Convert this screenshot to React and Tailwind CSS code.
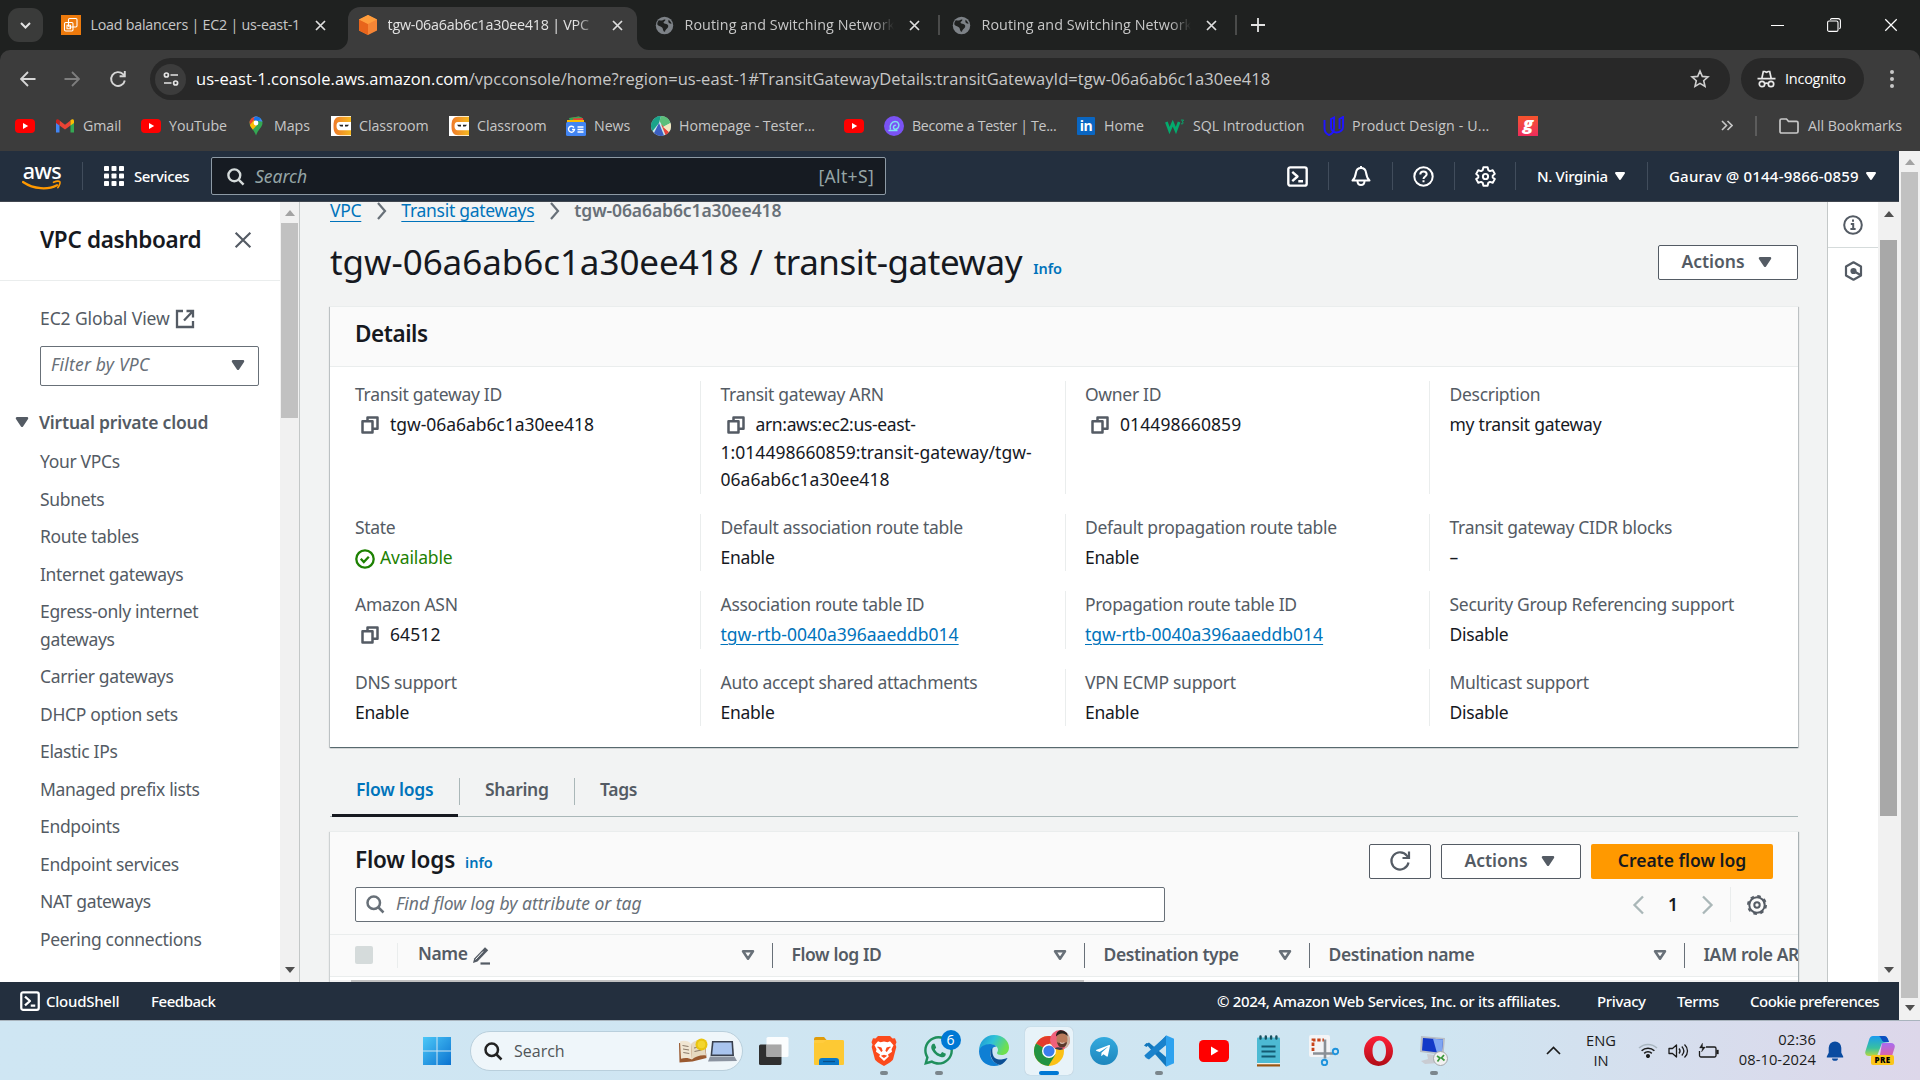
import React from "react";
import { FaWhatsapp, FaTelegramPlane } from "react-icons/fa";

/* ---------- small shared icons ---------- */
const Caret = ({ s = 20, c = "#545b64", open = false }) => (
  <svg width={s} height={s} viewBox="0 0 16 16" className="shrink-0">
    <path d="M4 5h8l-4 6z" fill={open ? "none" : c} stroke={c} strokeWidth="2" strokeLinejoin="round" />
  </svg>
);
const Close = ({ s = 11, c = "#dedede", w = 1.7 }) => (
  <svg width={s} height={s} viewBox="0 0 11 11" className="shrink-0">
    <path d="M1 1l9 9M10 1l-9 9" stroke={c} strokeWidth={w} />
  </svg>
);
const Copy = () => (
  <svg width="20" height="20" viewBox="0 0 16 16" fill="none" stroke="#545b64" strokeWidth="2" strokeLinejoin="round" className="inline-block align-[-4px] mx-[5px]">
    <path d="M2 5h8v9H2z" />
    <path d="M6 5V2h8v9h-4" />
  </svg>
);
const Magnifier = ({ s = 20, c = "#545b64" }) => (
  <svg width={s} height={s} viewBox="0 0 16 16" fill="none" stroke={c} strokeWidth="2" className="shrink-0">
    <circle cx="7" cy="7" r="5" />
    <path d="M10.8 10.8l4 4" />
  </svg>
);
const ShellIcon = ({ s = 20 }) => (
  <svg width={s} height={s} viewBox="0 0 16 16" fill="none" stroke="#fff" strokeWidth="1.8" strokeLinejoin="round" className="shrink-0">
    <rect x="1" y="1" width="14" height="14" rx="1.5" />
    <path d="M4 4.5l4 3.5-4 3.5M8.6 11.6h3.6" />
  </svg>
);
const Tri = ({ up, c = "#505050" }) => (
  <svg width="10" height="6" viewBox="0 0 10 6" className="shrink-0">
    <path d={up ? "M0 6h10L5 0z" : "M0 0h10L5 6z"} fill={c} />
  </svg>
);

/* ---------- browser: tabs ---------- */
const Ec2Icon = () => (
  <svg width="20" height="20" viewBox="0 0 20 20">
    <rect width="20" height="20" fill="#ed7a0c" />
    <g fill="none" stroke="#fff" strokeWidth="1.1">
      <rect x="3.5" y="7.5" width="8.5" height="8.5" rx="1.2" />
      <rect x="7.5" y="3.5" width="8.5" height="8.5" rx="1.2" />
      <path d="M6 10.2h3.5v3.5H6z" />
    </g>
  </svg>
);
const CubeIcon = () => (
  <svg width="20" height="20" viewBox="0 0 20 20">
    <path d="M10 0l9 4.5v11L10 20l-9-4.5v-11z" fill="#f58536" />
    <path d="M10 9v11l-9-4.5v-11z" fill="#e8641b" />
    <path d="M10 0l9 4.5L10 9 1 4.5z" fill="#ff9d3c" />
  </svg>
);
const Globe = () => (
  <svg width="19" height="19" viewBox="0 0 20 20">
    <circle cx="10" cy="10" r="9.2" fill="#7d8287" />
    <path d="M4 4.5c2 0 3 .6 4 0s2-1 3-.6c-.4 1.600-1.600 1.500-2 2.700-.3 1.300 1.600 1.500 3 1.900 1.500.5 2.500 1.700 1.700 3.300-.8 1.700-3 2-3.200 4.800-1.900-.3-2-2-2.400-3.500C7.700 11.300 3 10.500 2.500 9 2.200 7.300 3 5.700 4 4.500z" fill="#1f2120" />
    <path d="M14.500 4c.8.8 2.500 2.500 3 4-1.400.4-2.800-.6-3.400-1.700-.3-.8-.1-1.600.4-2.300z" fill="#1f2120" />
  </svg>
);

function Tab({ icon, title, active, wide, track = "tracking-[0.08px]" }) {
  return (
    <div className={`relative h-[50px] w-[297px] shrink-0 flex items-center pl-[10px] ${active ? "text-[#e3e3e3]" : "text-[#c7c7c7]"}`}>
      {active && (
        <div className="absolute left-0 right-[8px] top-[7px] bottom-0 bg-[#3c3c3c] rounded-t-[12px]">
          <svg width="12" height="12" className="absolute -left-[12px] bottom-0"><path d="M12 0v12H0A12 12 0 0 0 12 0z" fill="#3c3c3c" /></svg>
          <svg width="12" height="12" className="absolute -right-[12px] bottom-0"><path d="M0 0v12h12A12 12 0 0 1 0 0z" fill="#3c3c3c" /></svg>
        </div>
      )}
      <div className="relative w-[29.5px] flex items-center">{icon}</div>
      <div className={`relative overflow-hidden whitespace-nowrap w-[209.5px] text-[14.3px] ${track} ${wide ? "" : "[mask-image:linear-gradient(to_right,black_90%,transparent)]"}`}>{title}</div>
      <div className="relative ml-[15px] flex"><Close /></div>
    </div>
  );
}

function TabStrip() {
  return (
    <div className="h-[50px] bg-[#1f2120] flex items-center">
      <div className="w-[51px] shrink-0 pl-[8px]">
        <div className="w-[35px] h-[34px] rounded-[11px] bg-[#3a3b3a] flex items-center justify-center">
          <svg width="11" height="7" viewBox="0 0 11 7" fill="none" stroke="#e3e3e3" strokeWidth="2"><path d="M1 1l4.500 4.500L10 1" /></svg>
        </div>
      </div>
      <Tab icon={<Ec2Icon />} title="Load balancers | EC2 | us-east-1" wide track="tracking-[-0.25px]" />
      <Tab icon={<CubeIcon />} title="tgw-06a6ab6c1a30ee418 | VPC" active track="tracking-[-0.22px]" />
      <Tab icon={<Globe />} title="Routing and Switching Network" />
      <div className="w-[2px] h-[20px] bg-[#4a4b4a] -mx-[1px] -translate-x-[3px]" />
      <Tab icon={<Globe />} title="Routing and Switching Network" />
      <div className="w-[2px] h-[20px] bg-[#4a4b4a] -mx-[1px] -translate-x-[3px]" />
      <svg width="14" height="14" viewBox="0 0 14 14" stroke="#e3e3e3" strokeWidth="1.8" className="ml-[12px]"><path d="M7 0v14M0 7h14" /></svg>
      <div className="ml-auto flex items-center pr-[22px] gap-[43px]">
        <div className="w-[13px] h-px bg-white" />
        <svg width="14" height="14" viewBox="0 0 14 14" fill="none" stroke="#fff" strokeWidth="1.1"><rect x=".6" y="3" width="10.400" height="10.400" rx="1.500" /><path d="M3.400 1.800A1.600 1.600 0 0 1 4.700.6h6.500a2.200 2.200 0 0 1 2.200 2.200v6.500c0 .7-.4 1.200-1.100 1.400" /></svg>
        <Close s={14} c="#fff" w={0.95} />
      </div>
    </div>
  );
}

/* ---------- browser: address bar ---------- */
function AddressBar() {
  return (
    <div className="h-[50px] mt-[4px] flex items-center">
      <div className="w-[150px] shrink-0 flex items-center pl-[20px]">
        <svg width="16" height="16" viewBox="0 0 16 16" fill="none" stroke="#d6d6d6" strokeWidth="1.800"><path d="M15.500 8H1.500M8 1L1 8l7 7" /></svg>
        <svg width="16" height="16" viewBox="0 0 16 16" fill="none" stroke="#7e7e7e" strokeWidth="1.800" className="ml-[28px]"><path d="M.5 8h14M8 1l7 7-7 7" /></svg>
        <svg width="18" height="18" viewBox="0 0 18 18" fill="none" stroke="#d6d6d6" strokeWidth="1.900" className="ml-[29px]"><path d="M15.800 10.500A6.900 6.900 0 1 1 14 4.200l1.500 1.500" /><path d="M15.800 1v5.200h-5.200" /></svg>
      </div>
      <div className="w-[1580px] h-[42px] rounded-full bg-[#282828] flex items-center pl-[5px] pr-[20px] shrink-0">
        <div className="w-[31px] h-[31px] rounded-full bg-[#3c3c3c] flex items-center justify-center">
          <svg width="16" height="16" viewBox="0 0 16 16" fill="none" stroke="#e3e3e3" strokeWidth="1.700"><circle cx="3.400" cy="4" r="2" /><path d="M7.500 4H15M1 12h7.500" /><circle cx="12.600" cy="12" r="2" /></svg>
        </div>
        <div className="ml-[10px] pt-[1px] text-[16.5px] tracking-[0.05px] text-[#c7c7c7] whitespace-nowrap"><span className="text-white">us-east-1.console.aws.amazon.com</span>/vpcconsole/home?region=us-east-1#TransitGatewayDetails:transitGatewayId=tgw-06a6ab6c1a30ee418</div>
        <svg width="20" height="20" viewBox="0 0 20 20" fill="none" stroke="#d0d0d0" strokeWidth="1.600" className="ml-auto"><path d="M10 2l2.300 5.400 5.700.5-4.300 3.800 1.300 5.700-5-3-5 3 1.300-5.700L2 7.900l5.700-.5z" /></svg>
      </div>
      <div className="ml-[11px] w-[123px] h-[42px] rounded-full bg-[#282828] flex items-center pl-[16px] text-white text-[14.500px] tracking-[-0.25px] shrink-0">
        <svg width="19" height="18" viewBox="0 0 19 18" fill="none" stroke="#e8e8e8" strokeWidth="1.700"><path d="M.5 8.700h18M4.800 8.500l1.500-7h1.500l1.700.8 1.700-.8h1.500l1.500 7" /><circle cx="5" cy="14" r="2.700" /><circle cx="14" cy="14" r="2.700" /><path d="M7.700 13.500q1.800-.9 3.600 0" /></svg>
        <span className="ml-[9px]">Incognito</span>
      </div>
      <div className="ml-[26px] flex flex-col gap-[3px]">
        <i className="w-[4px] h-[4px] rounded-full bg-[#c7c7c7]" /><i className="w-[4px] h-[4px] rounded-full bg-[#c7c7c7]" /><i className="w-[4px] h-[4px] rounded-full bg-[#c7c7c7]" />
      </div>
    </div>
  );
}

/* ---------- browser: bookmarks ---------- */
const Yt = () => (
  <svg width="20" height="20" viewBox="0 0 20 20"><rect y="3" width="20" height="14" rx="4" fill="#f00" /><path d="M8 7l5.200 3L8 13z" fill="#fff" /></svg>
);
const Gmail = () => (
  <svg width="20" height="20" viewBox="0 0 20 20">
    <path d="M1 5v11.500h3.500V8z" fill="#4285f4" /><path d="M19 5v11.500h-3.500V8z" fill="#34a853" />
    <path d="M4.500 4.500v5L10 13.500l5.500-4v-5L10 8.700z" fill="#ea4335" />
    <path d="M15.500 4.500v5L19 7V5c0-1.800-2-2.500-3.500-.5z" fill="#fbbc04" /><path d="M4.500 4.500v5L1 7V5c0-1.800 2-2.500 3.500-.5z" fill="#c5221f" />
  </svg>
);
const MapsPin = () => (
  <svg width="20" height="20" viewBox="0 0 20 20">
    <clipPath id="pin"><path d="M10 .5a6.500 6.500 0 0 1 6.500 6.500c0 4-4.500 6.500-6.500 12.500C8 13.500 3.500 11 3.500 7A6.500 6.500 0 0 1 10 .5z" /></clipPath>
    <g clipPath="url(#pin)"><rect width="20" height="20" fill="#34a853" /><path d="M2 0h10L4.500 8.500 2 6z" fill="#ea4335" /><path d="M9 0h9v6l-5.500-1L7 1z" fill="#4285f4" /><path d="M3 10l5-6 4 4-6.500 7z" fill="#fbbc04" /><path d="M10 0h8L11 6 7.500 3.500z" fill="#1a73e8" /></g>
    <circle cx="10" cy="7" r="2.400" fill="#fff" />
  </svg>
);
const CN = () => (
  <svg width="20" height="20" viewBox="0 0 20 20"><defs><linearGradient id="cn" x1="0" y1="0" x2="1" y2="0"><stop offset="0" stopColor="#ef7a2a" /><stop offset="1" stopColor="#f5b820" /></linearGradient></defs><rect width="20" height="20" fill="#fff" /><path d="M20 .8H9C4.500 .8 2.500 3.500 2.500 10S4.500 19.200 9 19.200h11z" fill="url(#cn)" /><path d="M20 6H8.500C6.500 6 5.500 7.500 5.500 10s1 4.200 3 4.200H20z" fill="#fff" /><path d="M8 8.800h4v1.800h-2.500zM14 8.800h4l-1.500 1.800H14z" fill="#222" /></svg>
);
const News = () => (
  <svg width="20" height="20" viewBox="0 0 20 20"><path d="M4 2l9-1.500V6H5z" fill="#ea4335" /><path d="M3 2l10-1.500 3 1V5H4z" fill="#34a853" /><path d="M7 2.600l10-.6.500 3H7z" fill="#ea4335" /><path d="M1 4h17v4H1z" fill="#fbbc04" /><rect y="6" width="20" height="14" rx="1.500" fill="#4285f4" /><path d="M8 11.500A3 3 0 1 0 8.500 13.500H6M11.500 11h6M11.500 13.500h6M11.500 16h6" fill="none" stroke="#fff" strokeWidth="1.400" /></svg>
);
const Tester = () => (
  <svg width="20" height="20" viewBox="0 0 20 20"><circle cx="10" cy="10" r="10" fill="#cfe6ea" /><path d="M10 0a10 10 0 0 0-8.500 15.200L8 7z" fill="#1aa38a" /><path d="M10 0a10 10 0 0 1 9.500 7L12 11 8.500 5z" fill="#5bbf7a" /><path d="M8 7l5 12.500A10 10 0 0 1 3 17z" fill="#3b5fc0" /><path d="M10 8l4.500 11a10 10 0 0 0 3.500-3z" fill="#e8453c" /><path d="M12 11l7.500-4a10 10 0 0 1-1.500 9z" fill="#f2e9c0" /></svg>
);
const Purple = () => (
  <svg width="20" height="20" viewBox="0 0 20 20"><circle cx="10" cy="10" r="10" fill="#7a52f4" /><path d="M6.500 13.500C5 9 8 5.500 11 5.500c3.500 0 4.500 3 3.500 5.500-.8 2.500-4.500 3-5 .8-.3-2 1.500-3 2.500-2.300M4.500 14.500h9" fill="none" stroke="#7fe0f0" strokeWidth="1.500" /></svg>
);
const LinkedIn = () => (
  <div className="w-[18px] h-[18px] bg-[#0a66c2] text-white font-bold text-[14px] leading-[17px] text-center rounded-[1px] tracking-[-0.5px]">in</div>
);
const W3 = () => (
  <svg width="22" height="16" viewBox="0 0 22 16" fill="none" stroke="#04aa6d"><path d="M1.500 3.500L5 13l3.500-8L12 13l3.500-9.500" strokeWidth="3" /><path d="M17.500 1.500h3l-1.700 2c2 .2 1.700 2.800-1.300 2" strokeWidth="1.100" /></svg>
);
const Udacity = () => (
  <svg width="22" height="20" viewBox="0 0 22 20" fill="none" stroke="#2015ff" strokeWidth="1.900" className="shrink-0"><path d="M1.500 4v8c0 3.500 2 6 4.500 7 3-1 5-3.500 5-7V1.500L8 3v8c0 3.500 2.500 5.500 5.500 5.500S20 14.500 20 11V1l-3.500 2v10" /></svg>
);
const Gee = () => (
  <div className="w-[20px] h-[20px] bg-gradient-to-b from-[#f6532a] to-[#ee2a5a] text-white font-extrabold italic text-[18px] leading-[14px] text-center">g</div>
);
const bookmarks = [
  { icon: <Yt />, w: "w-[40px]" },
  { icon: <Gmail />, t: "Gmail", w: "w-[86px]" },
  { icon: <Yt />, t: "YouTube", w: "w-[105px]" },
  { icon: <MapsPin />, t: "Maps", w: "w-[85px]" },
  { icon: <CN />, t: "Classroom", w: "w-[118px]" },
  { icon: <CN />, t: "Classroom", w: "w-[117px]" },
  { icon: <News />, t: "News", w: "w-[85px]" },
  { icon: <Tester />, t: "Homepage - Tester...", w: "w-[193px]" },
  { icon: <Yt />, w: "w-[40px]" },
  { icon: <Purple />, t: "Become a Tester | Te...", w: "w-[192px] tracking-[-0.35px]" },
  { icon: <LinkedIn />, t: "Home", w: "w-[89px]" },
  { icon: <W3 />, t: "SQL Introduction", w: "w-[159px]" },
  { icon: <Udacity />, t: "Product Design - U...", w: "w-[194px] tracking-[0.15px]" },
  { icon: <Gee />, w: "w-[40px]" },
];
function Bookmarks() {
  return (
    <div className="h-[47px] pb-[3px] flex items-center pl-[15px] text-[14.2px] tracking-[-0.04px] text-[#c7c7c7] whitespace-nowrap">
      {bookmarks.map((b, i) => (
        <div key={i} className={`flex items-center shrink-0 ${b.w}`}>
          <div className="w-[20px] mr-[8px] flex justify-center shrink-0">{b.icon}</div>
          {b.t}
        </div>
      ))}
      <div className="ml-auto flex items-center pr-[18px]">
        <svg width="12" height="11" viewBox="0 0 12 11" fill="none" stroke="#c7c7c7" strokeWidth="1.600"><path d="M1 1l4.500 4.500L1 10M6.500 1L11 5.500 6.500 10" /></svg>
        <div className="w-[2px] h-[20px] bg-[#5c5c5c] mx-[22px]" />
        <svg width="20" height="16" viewBox="0 0 20 16" fill="none" stroke="#c7c7c7" strokeWidth="1.700"><path d="M1 2.500C1 1.500 1.700 1 2.500 1h5l2 2.300h8c.9 0 1.500.6 1.500 1.500v8.700c0 .9-.6 1.500-1.500 1.500h-15C1.600 15 1 14.400 1 13.500z" /></svg>
        <span className="ml-[9px] tracking-[-0.04px]">All Bookmarks</span>
      </div>
    </div>
  );
}

/* ---------- console header ---------- */
const HDiv = ({ cls }) => <div className={`w-px h-[28px] bg-[#414d5c] shrink-0 ${cls}`} />;
function AwsHeader() {
  return (
    <div className="h-[51px] bg-[#232f3e] border-b border-[#414750] flex items-center text-white text-[15px] font-medium whitespace-nowrap shrink-0">
      <div className="w-[40px] ml-[22px] flex flex-col items-center">
        <div className="text-[21.5px] leading-[16px] h-[17px] font-medium tracking-[-0.5px]">aws</div>
        <svg width="40" height="10" viewBox="0 0 40 10"><path d="M1 2c11 7.500 25 8 34 3.200" fill="none" stroke="#ff9900" strokeWidth="2.200" strokeLinecap="round" /><path d="M31.500 2.300c3-1.300 5.500-1.200 6.300-.6.600 1-.3 4-2 6" fill="none" stroke="#ff9900" strokeWidth="1.600" strokeLinecap="round" /></svg>
      </div>
      <HDiv cls="ml-[20px]" />
      <svg width="20" height="20" viewBox="0 0 20 20" fill="#fff" className="ml-[21px]">
        {[0, 7.5, 15].map((x) => [0, 7.5, 15].map((y) => <rect key={`${x}-${y}`} x={x} y={y} width="5" height="5" rx=".8" />))}
      </svg>
      <span className="ml-[10px] w-[58px] tracking-[-0.4px]">Services</span>
      <div className="ml-[19px] w-[675px] h-[38px] rounded-[2px] border border-[#8d9aa5] bg-[#161b22] flex items-center pl-[14px] pr-[11px] text-[17.5px] font-normal text-[#95a5a6] shrink-0">
        <Magnifier c="#d5dbdb" s={19} />
        <span className="ml-[10px] italic tracking-[0px]">Search</span>
        <span className="ml-auto tracking-[0.35px]">[Alt+S]</span>
      </div>
      <div className="ml-auto flex items-center pr-[20px]">
        <ShellIcon s={21} />
        <HDiv cls="ml-[20px]" />
        <svg width="20" height="21" viewBox="0 0 20 21" fill="none" stroke="#fff" strokeWidth="2" strokeLinejoin="round" className="ml-[22px]"><path d="M1.500 14.500h17c-2.700-2.500-3-4.500-3.500-8-.4-2.700-2-4.500-5-4.500S5.400 3.800 5 6.500c-.5 3.500-.8 5.500-3.500 8z" /><path d="M6.500 15c0 2.500 1.300 4 3.500 4s3.500-1.500 3.500-4M10 0v2" /></svg>
        <HDiv cls="ml-[21px]" />
        <svg width="21" height="21" viewBox="0 0 21 21" fill="none" stroke="#fff" strokeWidth="2" className="ml-[20px]"><circle cx="10.500" cy="10.500" r="9.200" /><path d="M7.300 8.500c0-2 1.400-3 3.200-3s3.200 1.100 3.200 2.800c0 2.200-3.200 2.200-3.200 4.700M10.500 14.300v2" /></svg>
        <HDiv cls="ml-[20px]" />
        <svg width="21" height="21" viewBox="0 0 16 16" fill="none" stroke="#fff" strokeWidth="1.500" strokeLinejoin="round" className="ml-[20px]"><path d="M6.400 1h3.200l.5 2.100 1.300.8 2.100-.7 1.600 2.800L13.500 7.400v1.300L15.100 10l-1.600 2.800-2.100-.7-1.300.8-.5 2.100H6.400l-.5-2.100-1.300-.8-2.100.7L.9 10l1.600-1.300V7.400L.9 6l1.600-2.800 2.100.7 1.300-.8z" /><circle cx="8" cy="8" r="2" /></svg>
        <HDiv cls="ml-[19px]" />
        <span className="ml-[21px] w-[71px] tracking-[-0.35px]">N. Virginia</span>
        <span className="ml-[4px] flex"><Caret s={16} c="#fff" /></span>
        <HDiv cls="ml-[19px]" />
        <span className="ml-[21px] w-[190px] tracking-[0.2px]">Gaurav @ 0144-9866-0859</span>
        <span className="ml-[4px] flex"><Caret s={16} c="#fff" /></span>
      </div>
    </div>
  );
}

/* ---------- side navigation ---------- */
const navItems = ["Your VPCs", "Subnets", "Route tables", "Internet gateways", "Egress-only internet gateways", "Carrier gateways", "DHCP option sets", "Elastic IPs", "Managed prefix lists", "Endpoints", "Endpoint services", "NAT gateways", "Peering connections"];
function Sidebar() {
  return (
    <div className="flex shrink-0 border-r border-[#c4c8c8]">
      <div className="w-[280px] bg-white text-[#545b64] text-[17.5px] leading-[27.5px] tracking-[-0.33px]">
        <div className="h-[79px] border-b border-[#eaeded] flex items-center pl-[40px] pb-[2px]">
          <span className="text-[22.5px] font-semibold text-[#16191f] tracking-[-0.33px] w-[194px]">VPC dashboard</span>
          <Close s={18} c="#545b64" w={1.3} />
        </div>
        <div className="pl-[40px] pt-[24px] flex items-center tracking-[-0.1px]">EC2 Global View
          <svg width="20" height="20" viewBox="0 0 20 20" fill="none" stroke="#545b64" strokeWidth="2.300" className="ml-[5px]"><path d="M8 2H2v16h16v-6M11.500 2H18v6.500M18 2l-9 9.500" /></svg>
        </div>
        <div className="ml-[40px] mt-[13px] w-[219px] h-[40px] border border-[#687078] rounded-[2px] flex items-center justify-between pl-[10px] pr-[10px] italic text-[#687078] tracking-[0.2px] pb-[1px]">
          Filter by VPC<Caret />
        </div>
        <div className="mt-[23px] flex items-center pl-[12px] font-semibold tracking-[-0.2px]"><Caret /><span className="ml-[7px]">Virtual private cloud</span></div>
        <div className="mt-[12px] pl-[40px] pr-[60px] flex flex-col gap-[10px]">
          {navItems.map((n) => <div key={n}>{n}</div>)}
        </div>
      </div>
      <div className="w-[19px] bg-[#f1f1f1] flex flex-col items-center pt-[8px] pb-[9px]">
        <Tri up c="#a3a3a3" />
        <div className="w-[17px] h-[195px] bg-[#c1c1c1] mt-[7px]" />
        <div className="mt-auto flex"><Tri /></div>
      </div>
    </div>
  );
}

/* ---------- details card ---------- */
const idText = "text-[#16191f] tracking-[-0.05px]";
const numText = "text-[#16191f] tracking-[0.1px]";
const wordText = "text-[#16191f] tracking-[-0.25px]";
const rows = [
  [
    { k: "Transit gateway ID", v: "tgw-06a6ab6c1a30ee418", copy: true, cls: idText },
    { k: "Transit gateway ARN", v: <><span className="tracking-[-0.35px]">arn:aws:ec2:us-east-</span><br />1:014498660859:transit-gateway/tgw-<br />06a6ab6c1a30ee418</>, copy: true, cls: "text-[#16191f] tracking-[0.03px]" },
    { k: "Owner ID", v: "014498660859", copy: true, cls: numText },
    { k: "Description", v: "my transit gateway", cls: wordText },
  ],
  [
    { k: "State", v: "Available", ok: true, cls: "text-[#1d8102] tracking-[-0.15px]" },
    { k: "Default association route table", v: "Enable", cls: wordText },
    { k: "Default propagation route table", v: "Enable", cls: wordText },
    { k: "Transit gateway CIDR blocks", v: "–", cls: wordText },
  ],
  [
    { k: "Amazon ASN", v: "64512", copy: true, cls: numText },
    { k: "Association route table ID", v: "tgw-rtb-0040a396aaeddb014", cls: "text-[#0073bb] underline underline-offset-[3px] decoration-1" },
    { k: "Propagation route table ID", v: "tgw-rtb-0040a396aaeddb014", cls: "text-[#0073bb] underline underline-offset-[3px] decoration-1" },
    { k: "Security Group Referencing support", v: "Disable", cls: wordText },
  ],
  [
    { k: "DNS support", v: "Enable", cls: wordText },
    { k: "Auto accept shared attachments", v: "Enable", cls: wordText },
    { k: "VPN ECMP support", v: "Enable", cls: wordText },
    { k: "Multicast support", v: "Disable", cls: wordText },
  ],
];
function Field({ k, v, copy, ok, cls }) {
  return (
    <div>
      <div className="text-[#545b64] tracking-[-0.3px]">{k}</div>
      <div className={`mt-[2.5px] whitespace-nowrap ${cls}`}>
        {copy && <><Copy /><span className="inline-block w-[5px]" /></>}
        {ok && (
          <svg width="20" height="20" viewBox="0 0 20 20" fill="none" stroke="#1d8102" strokeWidth="2.300" className="inline-block align-[-5px] mr-[5px]"><circle cx="10" cy="10" r="8.700" /><path d="M5.800 9.800l3 3.200 5-5.200" /></svg>
        )}
        {v}
      </div>
    </div>
  );
}
function DetailsCard() {
  return (
    <div className="mt-[26px] h-[441px] bg-white border-t border-[#eaeded] shadow-[0_1px_1px_0_rgba(0,28,36,0.5),1px_1px_1px_0_rgba(0,28,36,0.15),-1px_1px_1px_0_rgba(0,28,36,0.15)] shrink-0">
      <div className="h-[60px] bg-[#fafafa] border-b border-[#eaeded] flex items-center pl-[25px] pb-[5px] text-[22.5px] font-semibold text-[#16191f] tracking-[-0.45px]">Details</div>
      <div className="pt-[14px] pl-[25px] flex flex-col gap-[20px]">
        {rows.map((r, i) => (
          <div key={i} className="flex">
            {r.map((f, j) => (
              <div key={f.k} className={`shrink-0 ${j === 0 ? "w-[345px]" : j === 3 ? "w-[330px] border-l border-[#eaeded] pl-[19.500px]" : "w-[364.500px] border-l border-[#eaeded] pl-[19.500px]"}`}><Field {...f} /></div>
            ))}
          </div>
        ))}
      </div>
    </div>
  );
}

/* ---------- tabs and flow log table ---------- */
function PageTabs() {
  return (
    <div className="mt-[20px] h-[50px] border-b border-[#aab7b8] flex font-semibold text-[#545b64] shrink-0 tracking-[-0.3px]">
      <div className="relative w-[130px] border-r border-[#aab7b8] h-[27px] mt-[11px] flex items-center pl-[26px] text-[#0073bb] pb-[3px] tracking-[-0.2px]">Flow logs
        <div className="absolute left-[2px] top-[36px] w-[126px] h-[3px] bg-[#16191f]" />
      </div>
      <div className="w-[115px] border-r border-[#aab7b8] h-[27px] mt-[11px] flex items-center pl-[25px] pb-[3px]">Sharing</div>
      <div className="h-[27px] mt-[11px] flex items-center pl-[25px] pb-[3px]">Tags</div>
    </div>
  );
}
const Btn = ({ children, cls }) => (
  <div className={`h-[35px] border border-[#545b64] rounded-[2px] bg-white flex items-center justify-center font-semibold text-[#545b64] tracking-[0px] pb-[1px] shrink-0 ${cls}`}>{children}</div>
);
const cols = [
  { t: "Name", w: "w-[373.500px] pl-[20px] border-l-0", edit: true },
  { t: "Flow log ID", w: "w-[312px] pl-[19px]" },
  { t: "Destination type", w: "w-[225px] pl-[19px]" },
  { t: "Destination name", w: "w-[375px] pl-[19px]" },
  { t: "IAM role ARN", w: "w-[200px] pl-[19px]", last: true },
];
function FlowCard() {
  return (
    <div className="mt-[14px] h-[200px] bg-white shrink-0 border-t border-[#eaeded] shadow-[1px_1px_1px_0_rgba(0,28,36,0.3),-1px_1px_1px_0_rgba(0,28,36,0.15)]">
      <div className="h-[102px] bg-[#fafafa] pt-[12px] px-[25px]">
        <div className="flex items-center">
          <span className="text-[22.5px] font-semibold text-[#16191f] tracking-[-0.2px] pb-[3px]">Flow logs</span>
          <span className="ml-[10px] text-[14.500px] font-semibold text-[#0073bb] mt-[3px]">info</span>
          <Btn cls="ml-auto w-[62px]">
            <svg width="22" height="22" viewBox="0 0 22 22" fill="none" stroke="#545b64" strokeWidth="2.200"><path d="M19.500 12.500A8.600 8.600 0 1 1 18 5.800l1.500 2" /><path d="M20 1.500V8h-6.500" /></svg>
          </Btn>
          <Btn cls="ml-[10px] w-[140px]"><span>Actions</span><span className="ml-[10px] flex"><Caret /></span></Btn>
          <div className="ml-[10px] w-[182px] h-[35px] rounded-[2px] bg-[#ff9900] flex items-center justify-center font-semibold text-[#16191f] tracking-[0px] pb-[1px]">Create flow log</div>
        </div>
        <div className="mt-[8px] flex items-center">
          <div className="w-[810px] h-[35px] border border-[#687078] rounded-[2px] bg-white flex items-center pl-[9px] pb-[1px] italic text-[#687078]">
            <Magnifier c="#687078" /><span className="ml-[11px]">Find flow log by attribute or tag</span>
          </div>
          <svg width="13" height="20" viewBox="0 0 13 20" fill="none" stroke="#aab7b8" strokeWidth="2.300" className="ml-auto"><path d="M11 1.500L2.500 10l8.500 8.500" /></svg>
          <span className="w-[56px] text-center font-semibold text-[#16191f]">1</span>
          <svg width="13" height="20" viewBox="0 0 13 20" fill="none" stroke="#aab7b8" strokeWidth="2.300"><path d="M2 1.500l8.500 8.500L2 18.500" /></svg>
          <div className="w-px h-[35px] bg-[#eaeded] ml-[16px]" />
          <svg width="20" height="20" viewBox="0 0 20 20" fill="none" stroke="#545b64" strokeLinejoin="round" className="ml-[16px] mr-[6px]"><circle cx="10" cy="10" r="7.700" strokeWidth="2" /><circle cx="10" cy="10" r="9.100" strokeWidth="1.700" strokeDasharray="3.580 3.567" /><circle cx="10" cy="10" r="2.700" strokeWidth="2" /></svg>
        </div>
      </div>
      <div className="h-[43px] bg-[#fafafa] border-y border-[#eaeded] flex items-center overflow-hidden font-semibold text-[#545b64] tracking-[-0.4px] whitespace-nowrap pb-[1px]">
        <div className="ml-[25px] w-[18px] h-[18px] rounded-[2px] bg-[#d5dbdb] shrink-0" />
        <div className="ml-[24px] w-px h-[25px] bg-[#eaeded] shrink-0" />
        {cols.map((c) => (
          <div key={c.t} className={`h-[25px] flex items-center shrink-0 border-l border-[#687078] ${c.w}`}>
            {c.edit ? <span className="pb-[2px]">{c.t}</span> : c.t}
            {c.edit && <svg width="20" height="20" viewBox="0 0 20 20" className="ml-[3px]"><path d="M2 18l1.200-4.500L14 2.200l3.200 3L6.500 16.500z" fill="#545b64" /><path d="M4.500 14.500l7.500-8" stroke="#fafafa" strokeWidth="1" /><path d="M9.500 18.500H19" stroke="#545b64" strokeWidth="2.200" /></svg>}
            {!c.last && <span className="ml-auto mr-[14px] flex"><Caret open c="#687078" /></span>}
          </div>
        ))}
      </div>
      <div className="h-[2px] bg-white mt-[1px]" />
      <div className="h-[4px] bg-[#f1f1f1] pl-[21px]"><div className="w-[733px] h-[4px] bg-[#c1c1c1]" /></div>
    </div>
  );
}

function MainPanel() {
  return (
    <div className="w-[1527px] bg-[#f2f3f3] pl-[30px] pr-[29px] flex flex-col overflow-hidden text-[17.5px] leading-[27.5px] shrink-0">
      <div className="h-[24px] -mt-[3px] flex items-center text-[#0073bb] shrink-0 tracking-[-0.28px]">
        <span className="underline underline-offset-[4px] decoration-1">VPC</span>
        <svg width="11" height="18" viewBox="0 0 11 18" fill="none" stroke="#687078" strokeWidth="2.200" className="mx-[14.500px]"><path d="M2 1l7 8-7 8" /></svg>
        <span className="underline underline-offset-[4px] decoration-1">Transit gateways</span>
        <svg width="11" height="18" viewBox="0 0 11 18" fill="none" stroke="#687078" strokeWidth="2.200" className="mx-[14.500px]"><path d="M2 1l7 8-7 8" /></svg>
        <span className="font-semibold text-[#687078] tracking-[-0.1px]">tgw-06a6ab6c1a30ee418</span>
      </div>
      <div className="mt-[21px] h-[36px] flex items-center text-[#16191f] shrink-0">
        <span className="text-[35px] leading-[45px] tracking-[-0.06px] whitespace-nowrap [word-spacing:2px] pb-[1px]">tgw-06a6ab6c1a30ee418 / <span className="tracking-[-0.44px]">transit-gateway</span></span>
        <span className="ml-[11px] mt-[14px] text-[14.500px] font-semibold text-[#0073bb] tracking-[-0.1px]">Info</span>
        <Btn cls="ml-auto w-[140px]"><span>Actions</span><span className="ml-[10px] flex"><Caret /></span></Btn>
      </div>
      <DetailsCard />
      <PageTabs />
      <FlowCard />
    </div>
  );
}

function RightRail() {
  return (
    <>
      <div className="w-[51px] bg-white border-l border-[#c4c8c8] flex flex-col items-center shrink-0">
        <div className="h-[46px] w-full border-b border-[#d5dbdb] flex items-center justify-center">
          <svg width="20" height="20" viewBox="0 0 20 20" fill="none" stroke="#545b64" strokeWidth="2"><circle cx="10" cy="10" r="8.800" /><path d="M10 4.500v2.300M7.800 9h2.400v5M7.400 14h5.200" /></svg>
        </div>
        <svg width="19" height="20" viewBox="0 0 19 20" fill="none" stroke="#545b64" strokeWidth="2.200" strokeLinejoin="round" className="mt-[13px]"><path d="M9.500 1.300l7.500 4.200v9l-7.500 4.200L2 14.500v-9z" /><path d="M9.500 10l7 4" /><circle cx="9.500" cy="10" r="2" fill="#545b64" /></svg>
      </div>
      <div className="w-[21px] bg-[#f1f1f1] flex flex-col items-center pt-[9px] pb-[9px] shrink-0">
        <Tri up />
        <div className="w-[17px] h-[576px] bg-[#a8a8a8] mt-[23px]" />
        <div className="mt-auto flex"><Tri /></div>
      </div>
    </>
  );
}

function Footer() {
  return (
    <div className="h-[38px] bg-[#232f3e] flex items-center text-white text-[15px] font-medium tracking-[-0.38px] whitespace-nowrap shrink-0">
      <span className="ml-[20px] flex"><ShellIcon /></span>
      <span className="ml-[6px] w-[105px] tracking-[-0.25px]">CloudShell</span>
      <span className="tracking-[-0.45px]">Feedback</span>
      <span className="ml-auto w-[380px] tracking-[-0.31px]">© 2024, Amazon Web Services, Inc. or its affiliates.</span>
      <span className="w-[80px]">Privacy</span>
      <span className="w-[73px]">Terms</span>
      <span className="w-[149px] tracking-[-0.5px]">Cookie preferences</span>
    </div>
  );
}

/* ---------- desktop taskbar ---------- */
const Slot = ({ children, dot, active }) => (
  <div className="w-[55px] shrink-0 flex justify-center">
    <div className={`relative w-[48px] h-[48px] rounded-[5px] flex items-center justify-center ${active ? "bg-[#e8f3f9] shadow-[0_0_1px_#9ab]" : ""}`}>
      {children}
      {dot && <div className="absolute bottom-0 left-[20px] w-[8px] h-[4px] rounded-full bg-[#7b868c]" />}
      {active && <div className="absolute bottom-0 left-[14px] w-[20px] h-[4px] rounded-full bg-[#0078d4]" />}
    </div>
  </div>
);
function Taskbar() {
  return (
    <div className="h-[60px] border-t border-[#a9b4bd] bg-gradient-to-r from-[#cfe6f3] via-[#cfe5f1] via-75% to-[#ddd7ea] flex items-center font-['Open_Sans'] text-[#1b1b1b] shrink-0">
      <svg width="30" height="30" viewBox="0 0 30 30" className="ml-[422px]">
        <defs><linearGradient id="win" x1="0" y1="0" x2="1" y2="1" gradientUnits="objectBoundingBox"><stop offset="0" stopColor="#4cc8f8" /><stop offset="1" stopColor="#0a72d0" /></linearGradient></defs>
        <path d="M1 1h13.500v13.500H1zM15.500 1H29v13.500H15.500zM1 15.500h13.500V29H1zM15.500 15.500H29V29H15.500z" fill="url(#win)" />
      </svg>
      <div className="ml-[18px] w-[273px] h-[40px] rounded-full bg-[#eff6fa] border border-[#b9cfdc] flex items-center pl-[12px] shrink-0">
        <Magnifier s={20} c="#222" />
        <span className="ml-[11px] text-[16px] text-[#505558]">Search</span>
        <svg width="60" height="28" viewBox="0 0 60 28" className="ml-auto mr-[5px]">
          <path d="M2 6l12 1.500L28 4l1.500 17-14 3.500-13 1z" fill="#9a5a30" />
          <path d="M3 4.500c4-1.500 9-.5 11 2.500l1 15.500c-3-2-8-2-11-.8z" fill="#f0e6d2" /><path d="M14 7c2-3 8-4.500 13.500-3.500l1.500 15c-5-.7-11 1-14 4z" fill="#e6d9c0" />
          <path d="M5.500 8.500l6 1M6 12l6 1M6.300 15.500l6 1M17 11l7-1.500M17.500 14.500l7-1.500" stroke="#8a7a68" strokeWidth="1" />
          <circle cx="24.500" cy="7.500" r="6" fill="#e9c410" /><circle cx="24.500" cy="7.500" r="3.800" fill="#f3d62e" />
          <path d="M35 4h21l1 15H33.500z" fill="#39404e" /><path d="M36.500 5.500h18l.8 12H35.200z" fill="#a9c4ee" /><path d="M33 19.500h24.500L60 24l-29 .5z" fill="#8b93a0" />
        </svg>
      </div>
      <div className="ml-[3px] flex items-center">
        <Slot><svg width="30" height="30" viewBox="0 0 30 30"><rect x="0" y="8.500" width="22.500" height="20.500" rx="1.500" fill="#2f2f2f" /><rect x="7.500" y="1" width="22" height="20" rx="1.500" fill="#fff" fillOpacity=".9" /><rect x="7.500" y="8.500" width="15" height="12.500" fill="#a7a7a7" /></svg></Slot>
        <Slot><svg width="30" height="28" viewBox="0 0 30 28"><path d="M0 2a2 2 0 0 1 2-2h8l3 3.500H0z" fill="#e09c0a" /><rect y="3" width="30" height="25" rx="1.500" fill="#ffcc3e" /><path d="M0 6h9l4-3h15a2 2 0 0 1 2 2v21a2 2 0 0 1-2 2H2a2 2 0 0 1-2-2z" fill="#fdc934" /><path d="M5 28v-4a3 3 0 0 1 3-3h14a3 3 0 0 1 3 3v4z" fill="#0a78c8" /><path d="M9 24.500h12" stroke="#06508c" strokeWidth="1.300" /></svg></Slot>
        <Slot dot><svg width="26" height="32" viewBox="0 0 26 32"><path d="M7 1h12l2.500 2.500 2.500-.3 1.500 4-1 2.300.8 2.500-3 11.500c-.5 2-1.500 3-9.300 7.500C5.200 26.500 4.200 25.500 3.700 23.500L.7 12l.8-2.500-1-2.300 1.500-4 2.500.3z" fill="#fb4a1c" /><path d="M13 6.500l3.500.8 2.500-1 3.500 4-2 4 .5 2.500-4 2.700.8 2-4.800 4.500-4.800-4.500.8-2-4-2.700.5-2.500-2-4 3.500-4 2.500 1z" fill="#fff" /><path d="M6.500 12l3.500 1 1 2.500-1 1M19.500 12L16 13l-1 2.500 1 1M11 21l2-.7 2 .7-2 1.300z" stroke="#fb4a1c" strokeWidth="1.100" fill="#fb4a1c" /></svg></Slot>
        <Slot dot>
          <FaWhatsapp size={33} color="#1f8f5c" />
          <div className="absolute left-[26px] top-[3px] w-[20px] h-[20px] rounded-full bg-[#0078d4] text-white text-[14px] leading-[20px] text-center">6</div>
        </Slot>
        <Slot><svg width="30" height="31" viewBox="0 0 30 31">
          <defs><linearGradient id="eg" x1="0" y1="0" x2="1" y2=".4"><stop offset="0" stopColor="#1b8fd6" /><stop offset=".5" stopColor="#2fc2d8" /><stop offset="1" stopColor="#6fe04e" /></linearGradient></defs>
          <path d="M15 0c9 0 15 6 15 12.500 0 5-3.500 7.500-7.500 7.500-3 0-4.500-1-4.500-2 0-.8 1-1.200 1-3.200C19 12 16 9.500 12 9.500 6 9.500 1 13 0 16 0 7 6 0 15 0z" fill="url(#eg)" />
          <path d="M0 16C.5 12 5.500 9 11 9c3 0 5 1 6.500 2.500-4 0-7 4-6 9 1 5.500 6 8.500 9.500 9.500-2 .7-4 1-6 1C6 31 0 24.500 0 16z" fill="#0f7fd4" />
          <path d="M13.500 12.500C9 16 11.500 28 21 30c3-1 6-4 7.500-7-1 .3-12 4.500-14.500-3-.8-2.500-.8-5-.5-7.500z" fill="#0c4f94" />
        </svg></Slot>
        <Slot active>
          <svg width="30" height="30" viewBox="0 0 30 30"><circle cx="15" cy="15" r="15" fill="#fbc116" /><path d="M15 15L2 7.500A15 15 0 0 1 28 7.500H15z" fill="#e33b2e" /><path d="M2 7.500A15 15 0 0 0 14.500 30l7-11.500L15 15z" fill="#229342" /><circle cx="15" cy="15" r="7" fill="#fff" /><circle cx="15" cy="15" r="5.600" fill="#3b7ded" /></svg>
          <svg width="20" height="20" viewBox="0 0 20 20" className="absolute left-[25px] top-[3px]"><clipPath id="av"><circle cx="10" cy="10" r="10" /></clipPath><g clipPath="url(#av)"><rect width="20" height="20" fill="#f0607a" /><rect x="15" width="5" height="20" fill="#c9b7a4" /><ellipse cx="12" cy="9.500" rx="5.500" ry="7.500" fill="#b9795a" /><path d="M6 6.500c0-5 3-6.500 6.500-6.500s5.500 3 5 6.500c-1.500-2.500-3.500-3.200-5.500-3-2.500.2-4.500 1.500-6 3z" fill="#2a211e" /><path d="M7 12c1.500 1.500 8 1.500 10 0-.5 4-2.500 5.500-5 5.500S8 16 7 12z" fill="#5a382c" /><path d="M10 12.800q2 1.200 4.500 0" stroke="#f0dcd0" fill="none" /><path d="M3 20c2-3 5-3.500 9-2l2 2z" fill="#3a3a44" /></g></svg>
        </Slot>
        <Slot><div className="w-[28px] h-[28px] rounded-full bg-gradient-to-b from-[#34aade] to-[#1d86bd] flex items-center justify-center pr-[2px]"><FaTelegramPlane size={16} color="#fff" /></div></Slot>
        <Slot dot><svg width="30" height="32" viewBox="0 0 30 32"><path d="M2 9l3-1.500L22 22v9.500z" fill="#1277bd" /><path d="M2 23l3 1.500L22 10V.5z" fill="#1a82cc" /><path d="M0 10.500L2.500 8 5 9.500 2.500 12z" fill="#1277bd" /><path d="M2 23l-1.700-2.500L22 1v9z" fill="#1a82cc" /><path d="M22 .3l8 3.500v24.500l-8 3.500z" fill="#2ea2ef" /></svg></Slot>
        <Slot><svg width="30" height="22" viewBox="0 0 30 22"><rect width="30" height="22" rx="4.500" fill="#f00" /><path d="M12 6.500l7.500 4.500-7.500 4.500z" fill="#fff" /></svg></Slot>
        <Slot><svg width="23" height="32" viewBox="0 0 23 32"><rect y="2.500" width="23" height="26" rx="1" fill="#4dbad3" /><rect y="28" width="23" height="1.500" fill="#f4efe4" /><rect y="29.300" width="23" height="2.200" fill="#9c5510" /><path d="M4.500 11.500h14M4.500 16.500h14M4.500 21.500h14" stroke="#135a72" strokeWidth="1.800" /><path d="M3.500 1.500v2M8.800 1.500v2M14.100 1.500v2M19.400 1.500v2" stroke="#17505f" strokeWidth="2.400" strokeLinecap="round" /></svg></Slot>
        <Slot><svg width="31" height="31" viewBox="0 0 31 31" fill="none"><rect x="1" width="21" height="22" rx="2" fill="#f3f4f6" /><path d="M5 16V5h11" stroke="#c8441a" strokeWidth="2.800" strokeDasharray="3.300 1.800" /><path d="M17 4.500v19M5 18.500h20" stroke="#8a9096" strokeWidth="2.600" /><circle cx="27.500" cy="16.500" r="2.700" stroke="#1f93dc" strokeWidth="1.900" /><circle cx="16.500" cy="27.500" r="2.700" stroke="#1f93dc" strokeWidth="1.900" /></svg></Slot>
        <Slot><svg width="29" height="30" viewBox="0 0 29 30"><defs><linearGradient id="op" x1="0" y1="0" x2="0" y2="1"><stop offset="0" stopColor="#ff2038" /><stop offset="1" stopColor="#b00c16" /></linearGradient></defs><path d="M14.500 0a14.500 15 0 1 0 0 30 14.500 15 0 0 0 0-30zm1 4.500c4 0 6.500 4.500 6.500 10.500s-2.500 10.500-6.500 10.500S8.500 21 8.500 15s3-10.500 7-10.500z" fill="url(#op)" fillRule="evenodd" /></svg></Slot>
        <Slot dot><svg width="29" height="31" viewBox="0 0 29 31"><path d="M2 1l24 2-1.500 17L1 17z" fill="#b9bec6" /><path d="M4 3l20 1.600-1.200 13.400L3 15.500z" fill="#1238c8" /><path d="M14 3.800l10 .8-1.200 13.400-5-.7z" fill="#7fa6f2" /><path d="M8 19l7 1v5l5 3-14 1-4-3 7-2z" fill="#c9ccd2" /><circle cx="21.500" cy="23.500" r="7" fill="#f1f1f1" stroke="#a5a8ac" /><path d="M18 21l3 2-2.500 3.500M25 20l-2.500 3 3 2.500" stroke="#3b9a3b" strokeWidth="1.700" fill="none" /></svg></Slot>
      </div>
      <div className="ml-auto flex items-center text-[14.700px]">
        <svg width="15" height="9" viewBox="0 0 15 9" fill="none" stroke="#1b1b1b" strokeWidth="1.700"><path d="M1 8l6.500-6.500L14 8" /></svg>
        <div className="ml-[25px] w-[30px] text-center leading-[20px] pb-[1px]">ENG<br />IN</div>
        <svg width="20" height="15" viewBox="0 0 20 15" fill="none" stroke="#1b1b1b" strokeWidth="1.500" className="ml-[22px]"><path d="M1 5a13 13 0 0 1 18 0" stroke="#a9b6c0" /><path d="M3.600 7.800a9.200 9.200 0 0 1 12.800 0M6.200 10.400a5.400 5.400 0 0 1 7.600 0" /><circle cx="10" cy="13" r="1.300" fill="#1b1b1b" /></svg>
        <svg width="21" height="16" viewBox="0 0 21 16" fill="none" stroke="#1b1b1b" strokeWidth="1.300" className="ml-[10px]"><path d="M1 5.500h3.500L8.500 2v12l-4-3.500H1z" strokeLinejoin="round" /><path d="M11 5.500c1.300 1.500 1.300 3.500 0 5M13.800 3.500c2.500 2.700 2.500 6.300 0 9M16.500 1.500c4 3.800 4 9.200 0 13" /></svg>
        <svg width="21" height="16" viewBox="0 0 21 16" fill="none" stroke="#1b1b1b" strokeWidth="1.300" className="ml-[9px]"><path d="M8 4h8.500A1.500 1.500 0 0 1 18 5.500v7a1.500 1.500 0 0 1-1.500 1.500H3A1.500 1.500 0 0 1 1.500 12.500V8" /><path d="M19 7.500v3h1v-3z" fill="#1b1b1b" /><path d="M4.500 0L1.500 5h3l-1 4 4-5h-3z" fill="#1b1b1b" strokeWidth=".3" /></svg>
        <div className="ml-[18px] w-[79px] text-right leading-[20px] tracking-[0.06px] pb-[3px] whitespace-nowrap">02:36<br />08-10-2024</div>
        <svg width="18" height="20" viewBox="0 0 18 20" fill="#0a4ba0" className="ml-[10px]"><path d="M9 .5A6.300 6.300 0 0 0 2.700 6.800v5L.8 15.500v.9h16.400v-.9l-1.900-3.700v-5A6.300 6.300 0 0 0 9 .5zM6 17.500h6a3 2.300 0 0 1-6 0z" /></svg>
        <div className="relative ml-[21px] mr-[25px] w-[30px] h-[29px]">
          <svg width="30" height="26" viewBox="0 0 30 26"><defs><linearGradient id="ca" x1="0" y1="0" x2="0" y2="1"><stop offset="0" stopColor="#1a9bf0" /><stop offset=".6" stopColor="#38c0a0" /><stop offset="1" stopColor="#b8d840" /></linearGradient><linearGradient id="cb" x1="0" y1="0" x2="0" y2="1"><stop offset="0" stopColor="#a86cf0" /><stop offset="1" stopColor="#f0608c" /></linearGradient></defs><path d="M8 0h11c3 0 4 3 5 6l-7 1-5 13H4c-3 0-4.500-2-3.500-5L4 4c.7-2.500 2-4 4-4z" fill="url(#ca)" /><path d="M17 7h9c3 0 4.500 2 3.500 5L27 20c-1 3-2.500 5-5 5H11c3 0 3.500-3 4-6z" fill="url(#cb)" /><path d="M14 0h5c3 0 4 3 5 6h-5c-2 0-2.500-4-5-6z" fill="#0c4fc0" /></svg>
          <div className="absolute left-[6px] bottom-0 w-[23px] h-[10px] rounded-[2px] bg-[#fbc51a] text-black font-extrabold text-[8px] leading-[10px] text-center tracking-[0.3px]">PRE</div>
        </div>
      </div>
    </div>
  );
}

export default function App() {
  return (
    <div className="w-[1920px] h-[1080px] overflow-hidden flex flex-col font-['Open_Sans',sans-serif] bg-[#1f2120]">
      <TabStrip />
      <div className="h-[101px] bg-[#3c3c3c] rounded-t-[10px] shrink-0">
        <AddressBar />
        <Bookmarks />
      </div>
      <div className="h-[869px] flex shrink-0 font-['Noto_Sans',sans-serif]">
        <div className="w-[1899px] flex flex-col">
          <AwsHeader />
          <div className="h-[780px] flex overflow-hidden shrink-0">
            <Sidebar />
            <MainPanel />
            <RightRail />
          </div>
          <Footer />
        </div>
        <div className="w-[21px] bg-[#f1f1f1] flex flex-col items-center pt-[8px] pb-[9px]">
          <Tri up c="#a3a3a3" />
          <div className="w-[17px] h-[826px] bg-[#c1c1c1] mt-[7px]" />
          <div className="mt-auto flex"><Tri /></div>
        </div>
      </div>
      <Taskbar />
    </div>
  );
}
